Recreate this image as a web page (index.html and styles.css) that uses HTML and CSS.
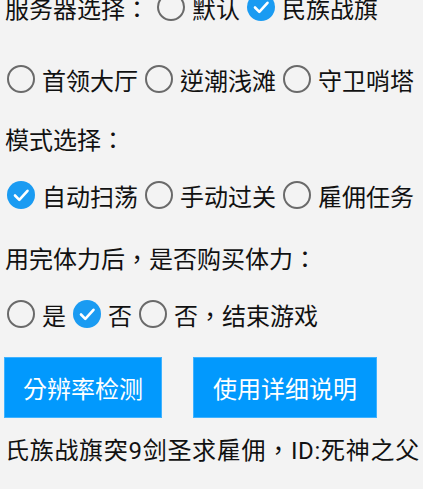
FILE: index.html
```html
<!DOCTYPE html>
<html lang="zh-TW">
<head>
    <meta charset="UTF-8">
    <meta name="viewport" content="width=device-width, initial-scale=1.0">
    <title>设置</title>
    <link rel="stylesheet" href="styles.css">
</head>
<body>
    <div class="page">
        <div class="row row-server">
            <span class="label">服务器选择：</span>
            <label class="radio"><span class="dot"></span>默认</label>
            <label class="radio checked"><span class="dot"><svg viewBox="0 0 28 28"><path d="M8 14.5 L12.3 18.8 L20.5 9.8"/></svg></span>民族战旗</label>
        </div>
        <div class="row row-radios">
            <label class="radio"><span class="dot"></span>首领大厅</label>
            <label class="radio"><span class="dot"></span>逆潮浅滩</label>
            <label class="radio"><span class="dot"></span>守卫哨塔</label>
        </div>
        <div class="row row-title">模式选择：</div>
        <div class="row row-mode">
            <label class="radio checked"><span class="dot"><svg viewBox="0 0 28 28"><path d="M8 14.5 L12.3 18.8 L20.5 9.8"/></svg></span>自动扫荡</label>
            <label class="radio"><span class="dot"></span>手动过关</label>
            <label class="radio"><span class="dot"></span>雇佣任务</label>
        </div>
        <div class="row row-title2">用完体力后，是否购买体力：</div>
        <div class="row row-buy">
            <label class="radio"><span class="dot"></span>是</label>
            <label class="radio checked"><span class="dot"><svg viewBox="0 0 28 28"><path d="M8 14.5 L12.3 18.8 L20.5 9.8"/></svg></span>否</label>
            <label class="radio"><span class="dot"></span>否，结束游戏</label>
        </div>
        <div class="buttons">
            <button class="btn btn-check">分辨率检测</button>
            <button class="btn btn-help">使用详细说明</button>
        </div>
        <div class="row row-note">氏族战旗突9剑圣求雇佣，ID:死神之父</div>
    </div>
</body>
</html>
```
FILE: styles.css
```css
body {
    margin: 0;
    padding: 0;
    background-color: #f3f3f3;
    font-family: Roboto, "Noto Sans CJK TC", sans-serif;
    font-size: 24px;
    color: #111;
    overflow: hidden;
}
.page {
    margin-top: -29px;
}
.row {
    display: flex;
    align-items: center;
    white-space: nowrap;
}
.row-server {
    height: 72px;
    padding-left: 5px;
}
.row-radios {
    height: 72px;
}
.row-title {
    height: 46px;
    padding-left: 5px;
}
.row-mode {
    height: 68px;
}
.row-title2 {
    height: 56px;
    padding-left: 5px;
}
.row-buy {
    height: 58px;
}
.row-note {
    height: 60px;
    padding-left: 5px;
    letter-spacing: 0.7px;
}
.label {
    margin-right: 1px;
}
.radio {
    display: flex;
    align-items: center;
    padding-left: 7px;
}
.dot {
    width: 28px;
    height: 28px;
    box-sizing: border-box;
    border: 2.5px solid #6a6a6a;
    border-radius: 50%;
    margin-right: 7px;
    display: flex;
}
.radio.checked .dot {
    border: none;
    background-color: #1a9bf2;
}
.dot svg {
    width: 28px;
    height: 28px;
}
.dot svg path {
    fill: none;
    stroke: #fff;
    stroke-width: 2.6;
    stroke-linecap: round;
    stroke-linejoin: round;
}
.buttons {
    display: flex;
    gap: 31px;
    padding: 14px 0 0 4px;
}
.btn {
    height: 61px;
    padding: 0;
    box-sizing: border-box;
    border: 1px solid #3fb2ff;
    background-color: #0299fd;
    color: #fff;
    font-family: Roboto, "Noto Sans CJK TC", sans-serif;
    font-size: 24px;
    border-radius: 0;
    white-space: nowrap;
}
.btn-check {
    width: 158px;
}
.btn-help {
    width: 184px;
}
```
